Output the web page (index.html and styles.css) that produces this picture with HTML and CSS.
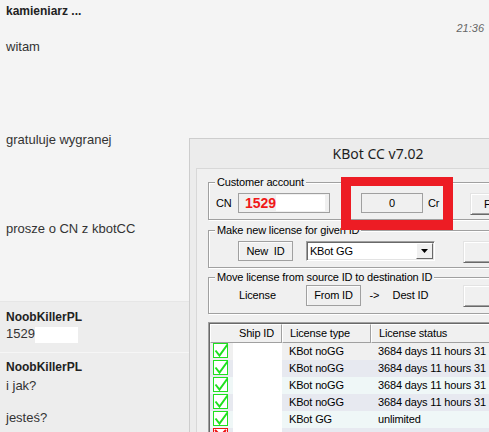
FILE: index.html
```html
<!DOCTYPE html>
<html lang="pl">
<head>
  <meta charset="UTF-8">
  <meta name="viewport" content="width=device-width, initial-scale=1.0">
  <title>Czat</title>
  <link rel="stylesheet" href="styles.css">
</head>
<body>
  <div class="chat">
    <div class="thread">
      <div class="name">kamieniarz ...</div>
      <div class="time">21:36</div>
      <p class="line">witam</p>
      <p class="line gap1">gratuluje wygranej</p>
      <p class="line gap2">prosze o CN z kbotCC</p>
    </div>
    <div class="reply first">
      <div class="name">NoobKillerPL</div>
      <p class="line short">1529<span class="blank"></span></p>
    </div>
    <div class="reply last">
      <div class="name">NoobKillerPL</div>
      <p class="line">i jak?</p>
      <p class="line gap3">jesteś?</p>
    </div>
  </div>

  <!-- screenshot of the license tool pasted into the chat -->
  <div class="window">
    <div class="titlebar">KBot CC v7.02</div>
    <div class="client">
      <div class="group g1">
        <span class="caption">Customer account</span>
        <span class="lbl cn-lbl">CN</span>
        <div class="field cn"><b>1529</b><span class="blank-field"></span></div>
        <div class="field credit">0</div>
        <span class="lbl unit">Cr</span>
        <div class="btn find">F</div>
      </div>

      <div class="group g2">
        <span class="caption">Make new license for given ID</span>
        <div class="flatbtn newid">New&nbsp;&nbsp;ID</div>
        <div class="combo">
          <span class="combo-text">KBot GG</span>
          <span class="combo-arrow">
            <svg width="7" height="4" viewBox="0 0 7 4"><path d="M0 0h7L3.5 4z" fill="#000"/></svg>
          </span>
        </div>
        <div class="btn wide"></div>
      </div>

      <div class="group g3">
        <span class="caption">Move license from source ID to destination ID</span>
        <span class="lbl lic">License</span>
        <div class="flatbtn fromid">From ID</div>
        <span class="lbl arrow">-&gt;</span>
        <span class="lbl dest">Dest ID</span>
        <div class="btn wide"></div>
      </div>

      <div class="list">
        <div class="list-inner">
          <div class="row head">
            <div class="hcell ship">Ship ID</div>
            <div class="hcell">License type</div>
            <div class="hcell">License status</div>
          </div>
          <div class="row r1">
            <div class="icon"><svg width="16" height="16" viewBox="0 0 16 16"><rect x="0.5" y="0.5" width="14" height="14" fill="#fff" stroke="#1fe01f"/><path d="M2.5 7.5l4 5 8-11" fill="none" stroke="#1fe01f" stroke-width="2"/></svg></div>
            <div class="shipid"></div>
            <div class="cell">KBot noGG</div>
            <div class="cell">3684 days 11 hours 31</div>
          </div>
          <div class="row r2">
            <div class="icon"><svg width="16" height="16" viewBox="0 0 16 16"><rect x="0.5" y="0.5" width="14" height="14" fill="#fff" stroke="#1fe01f"/><path d="M2.5 7.5l4 5 8-11" fill="none" stroke="#1fe01f" stroke-width="2"/></svg></div>
            <div class="shipid"></div>
            <div class="cell">KBot noGG</div>
            <div class="cell">3684 days 11 hours 31</div>
          </div>
          <div class="row r3">
            <div class="icon"><svg width="16" height="16" viewBox="0 0 16 16"><rect x="0.5" y="0.5" width="14" height="14" fill="#fff" stroke="#1fe01f"/><path d="M2.5 7.5l4 5 8-11" fill="none" stroke="#1fe01f" stroke-width="2"/></svg></div>
            <div class="shipid"></div>
            <div class="cell">KBot noGG</div>
            <div class="cell">3684 days 11 hours 31</div>
          </div>
          <div class="row r2">
            <div class="icon"><svg width="16" height="16" viewBox="0 0 16 16"><rect x="0.5" y="0.5" width="14" height="14" fill="#fff" stroke="#1fe01f"/><path d="M2.5 7.5l4 5 8-11" fill="none" stroke="#1fe01f" stroke-width="2"/></svg></div>
            <div class="shipid"></div>
            <div class="cell">KBot noGG</div>
            <div class="cell">3684 days 11 hours 31</div>
          </div>
          <div class="row r3">
            <div class="icon"><svg width="16" height="16" viewBox="0 0 16 16"><rect x="0.5" y="0.5" width="14" height="14" fill="#fff" stroke="#1fe01f"/><path d="M2.5 7.5l4 5 8-11" fill="none" stroke="#1fe01f" stroke-width="2"/></svg></div>
            <div class="shipid"></div>
            <div class="cell">KBot GG</div>
            <div class="cell">unlimited</div>
          </div>
          <div class="row r2">
            <div class="icon"><svg width="16" height="16" viewBox="0 0 16 16"><rect x="0.5" y="0.5" width="14" height="14" fill="#fff" stroke="#ee1111"/><path d="M2 2l11 11M13 2L2 13" stroke="#ee1111" stroke-width="2"/></svg></div>
            <div class="shipid"></div>
            <div class="cell"></div>
            <div class="cell"></div>
          </div>
        </div>
      </div>
    </div>
  </div>

  <div class="highlight"></div>
</body>
</html>
```

FILE: styles.css
```css
html, body {
  margin: 0;
  width: 489px;
  height: 432px;
  overflow: hidden;
}
body {
  position: relative;
  background: #f4f4f4;
  font-family: "Liberation Sans", Arial, sans-serif;
  color: #333;
}

/* chat */
.chat p {
  margin: 0;
}
.thread {
  height: 301px;
  box-sizing: border-box;
  padding: 4px 5px 0 6px;
}
.name {
  font-size: 12px;
  line-height: 14px;
  font-weight: bold;
  color: #222;
}
.time {
  margin-top: 4px;
  font-size: 11px;
  line-height: 13px;
  font-style: italic;
  color: #666;
  text-align: right;
}
.line {
  margin-top: 4px !important;
  font-size: 13px;
  line-height: 16px;
}
.line.gap1 {
  margin-top: 77px !important;
}
.line.gap2 {
  margin-top: 73px !important;
}
.line.gap3 {
  margin-top: 16px !important;
}
.line.short {
  margin-top: 2px !important;
  height: 16px;
}
.blank {
  display: inline-block;
  width: 43px;
  height: 16px;
  margin-top: 1px;
  vertical-align: top;
  background: #fff;
}
.reply {
  background: #ededed;
  padding: 0 6px;
  box-sizing: border-box;
}
.reply.first {
  height: 51px;
  padding-top: 8px;
  border-top: 1px solid #e6e6e6;
}
.reply.last {
  height: 81px;
  padding-top: 7px;
  border-top: 1px solid #f6f6f6;
}

/* pasted dialog */
.window {
  position: absolute;
  left: 189px;
  top: 138px;
  width: 378px;
  height: 320px;
  box-sizing: border-box;
  border: 1px solid #cdcdcd;
  background: #ececec;
  font-size: 11px;
  letter-spacing: -0.15px;
  color: #000;
}
.titlebar {
  height: 29px;
  line-height: 29px;
  text-align: center;
  font-family: "Noto Sans", sans-serif;
  font-size: 14px;
  letter-spacing: 0;
  color: #1e1e1e;
}
.client {
  height: 300px;
  margin-left: 6px;
  padding: 13px 12px 0 11px;
  border-top: 1px solid #d8d8d8;
  border-left: 1px solid #d8d8d8;
  background: #f0f0f0;
}
.group {
  position: relative;
  display: flex;
  align-items: flex-start;
  border: 1px solid #a0a0a0;
  box-shadow: inset 1px 1px 0 #fff, 1px 1px 0 #fff;
}
.caption {
  position: absolute;
  top: -7px;
  left: 6px;
  padding: 0 2px;
  line-height: 13px;
  background: #f0f0f0;
  white-space: nowrap;
}
.g1 {
  padding: 10px 0 4px 7px;
}
.g2 {
  margin-top: 10px;
  padding: 10px 0 4px 7px;
}
.g3 {
  margin-top: 9px;
  padding: 7px 0 6px 7px;
}
.lbl {
  line-height: 20px;
  white-space: nowrap;
}
.cn-lbl {
  width: 22px;
}
.field {
  height: 20px;
  box-sizing: border-box;
  border: 1px solid #a0a0a0;
  background: #f0f0f0;
  line-height: 18px;
}
.field.cn {
  width: 92px;
  display: flex;
  align-items: center;
  padding-left: 6px;
}
.field.cn b {
  color: #f01818;
  font-size: 14px;
  letter-spacing: 0;
}
.blank-field {
  width: 49px;
  height: 16px;
  background: #fff;
}
.field.credit {
  width: 62px;
  margin-left: 31px;
  text-align: center;
}
.unit {
  width: 12px;
  margin-left: 5px;
}
.btn {
  height: 22px;
  box-sizing: border-box;
  border: 1px solid;
  border-color: #e3e3e3 #696969 #696969 #e3e3e3;
  box-shadow: inset 1px 1px 0 #fff, inset -1px -1px 0 #a0a0a0;
  background: #f0f0f0;
  line-height: 20px;
  flex: none;
}
.btn.find {
  width: 47px;
  margin-left: 30px;
  padding-left: 13px;
}
.btn.wide {
  width: 90px;
  margin-left: 28px;
}
.flatbtn {
  height: 20px;
  box-sizing: border-box;
  border: 1px solid #a0a0a0;
  box-shadow: inset 1px 1px 0 #fbfbfb;
  background: #f0f0f0;
  line-height: 18px;
  text-align: center;
}
.newid {
  width: 57px;
  margin-left: 22px;
}
.combo {
  display: flex;
  align-items: center;
  width: 134px;
  height: 20px;
  margin-left: 13px;
  box-sizing: border-box;
  border: 1px solid;
  border-color: #a0a0a0 #fff #fff #a0a0a0;
  box-shadow: inset 1px 1px 0 #696969, inset -1px -1px 0 #e3e3e3;
  background: #fff;
}
.combo-text {
  flex: 1;
  padding-left: 3px;
}
.combo-arrow {
  display: flex;
  align-items: center;
  justify-content: center;
  width: 17px;
  height: 16px;
  margin-right: 1px;
  box-sizing: border-box;
  border: 1px solid;
  border-color: #fff #696969 #696969 #fff;
  background: #f0f0f0;
}
.g3 .lbl {
  line-height: 21px;
}
.lic {
  width: 69px;
  margin-left: 23px;
}
.fromid {
  width: 58px;
  height: 21px;
  line-height: 19px;
}
.arrow {
  width: 24px;
  margin-left: 8px;
}
.dest {
  width: 44px;
}

/* license list */
.list {
  margin-top: 8px;
  border: 1px solid #a0a0a0;
}
.list-inner {
  border: 1px solid;
  border-color: #696969 #e3e3e3 #e3e3e3 #696969;
  background: #fff;
}
.row {
  display: grid;
  grid-template-columns: 23px 49px 89px 1fr;
  height: 17px;
  line-height: 17px;
  white-space: nowrap;
}
.row.head {
  grid-template-columns: 72px 89px 1fr;
  height: 19px;
  line-height: 17px;
}
.hcell {
  box-sizing: border-box;
  padding-left: 7px;
  border: 1px solid;
  border-color: #fff #a0a0a0 #a0a0a0 #fff;
  background: #f0f0f0;
}
.hcell.ship {
  text-align: right;
  padding: 0 7px 0 0;
}
.icon {
  padding: 0 0 0 3px;
  line-height: 0;
}
.shipid {
  background: #fff;
}
.cell {
  padding-left: 7px;
  overflow: hidden;
}
.r1 {
  background: #f0f0f0;
}
.r2 {
  background: #e7e9f0;
}
.r3 {
  background: #eff7f7;
}

/* red frame drawn over the credit box */
.highlight {
  position: absolute;
  left: 341px;
  top: 177px;
  width: 112px;
  height: 53px;
  box-sizing: border-box;
  border: 10px solid #ed1c24;
  border-top-width: 9px;
}
```
